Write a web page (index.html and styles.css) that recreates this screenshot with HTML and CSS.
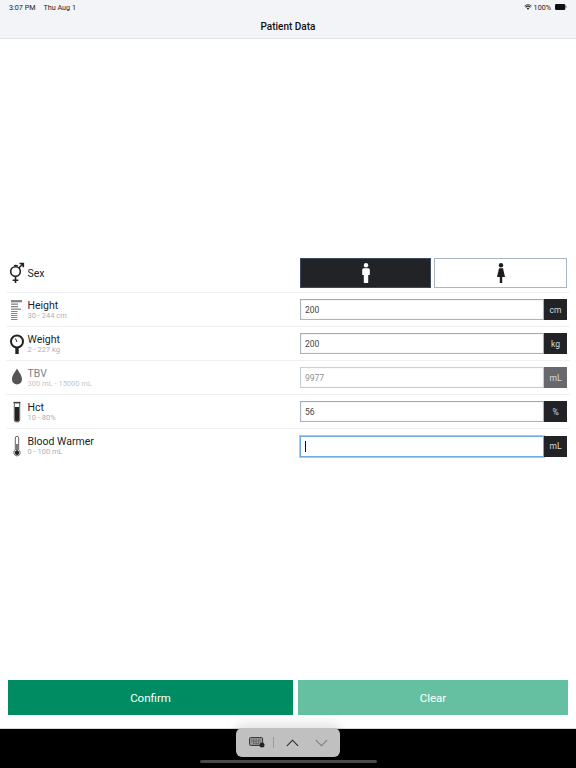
FILE: index.html
```html
<!DOCTYPE html>
<html lang="en">
<head>
<meta charset="utf-8">
<title>Patient Data</title>
<link rel="stylesheet" href="styles.css">
</head>
<body>
<div class="app">
  <header class="top">
    <div class="status">
      <div class="status-left"><span>3:07 PM</span><span>Thu Aug 1</span></div>
      <div class="status-right">
        <svg class="wifi" viewBox="0 0 10 8"><path d="M5 7.8 3.3 5.9a2.4 2.4 0 0 1 3.4 0zM2.3 4.9l-1-1a5.3 5.3 0 0 1 7.400 0l-1 1a3.900 3.900 0 0 0-5.400 0zM.6 3.200 0 2.500a7.200 7.200 0 0 1 10 0l-.6.7a6.300 6.300 0 0 0-8.800 0z"/></svg>
        <span>100%</span>
        <svg class="battery" viewBox="0 0 14 7"><rect x="0" y="0" width="12" height="7" rx="1.500"/><rect x="12.500" y="2" width="1" height="3" rx=".5" opacity=".5"/></svg>
      </div>
    </div>
    <h1 class="title">Patient Data</h1>
  </header>

  <main class="main">
    <div class="form">
      <div class="row row-sex">
        <div class="label">
          <svg class="icon" viewBox="0 0 18 22"><g fill="none" stroke="#222" stroke-width="1.600"><circle cx="7.500" cy="9.500" r="4.800"/><path d="M7.500 14.300v6.700M4.700 18.300h5.600M10.800 6 14.800 2M11.500 1.500H15.300V5.300"/></g><path d="M6 3.500a5.500 5.500 0 0 1 4 .5" fill="none" stroke="#222" stroke-width="1.200"/></svg>
          <div class="name">Sex</div>
        </div>
        <div class="control sex">
          <button class="sex-btn sex-on" type="button">
            <svg class="person" viewBox="0 0 8 20"><circle cx="4" cy="2.300" r="2.200"/><path d="M1.700 5.300h4.600q1.500 0 1.500 1.500v5.200H6.200V20H1.800v-8H.2V6.800q0-1.500 1.500-1.500z"/></svg>
          </button>
          <button class="sex-btn" type="button">
            <svg class="person dark" viewBox="0 0 8 20"><circle cx="4" cy="2.300" r="2.200"/><path d="M2 5.300h4L8 14H5.200v6H2.800v-6H0z"/></svg>
          </button>
        </div>
      </div>

      <div class="row">
        <div class="label">
          <svg class="icon" viewBox="0 0 18 22"><g fill="#888"><rect x="3" y="1" width="11" height="2.400"/><rect x="3" y="4.500" width="7" height="1.300"/><rect x="3" y="7" width="7" height="1.300"/><rect x="3" y="9.500" width="10" height="1.300"/><rect x="3" y="12" width="6.500" height="1"/><rect x="3" y="14" width="6.500" height="1"/><rect x="3" y="16" width="6.500" height="1"/><rect x="3" y="18" width="6.500" height="1"/><rect x="3" y="20" width="6.500" height="1"/></g></svg>
          <div class="name">Height<small>30 - 244 cm</small></div>
        </div>
        <div class="control"><div class="field">200</div><div class="unit">cm</div></div>
      </div>

      <div class="row">
        <div class="label">
          <svg class="icon" viewBox="0 0 18 22"><circle cx="9" cy="8.500" r="6" fill="none" stroke="#222" stroke-width="2"/><path d="M7.300 14h3.400v7H7.300z" fill="#222"/><path d="M7.500 5.500 9 9" stroke="#222" stroke-width="1"/></svg>
          <div class="name">Weight<small>2 - 227 kg</small></div>
        </div>
        <div class="control"><div class="field">200</div><div class="unit">kg</div></div>
      </div>

      <div class="row row-off">
        <div class="label">
          <svg class="icon" viewBox="0 0 18 22"><path d="M9 1.500c2 4 5 6.500 5 11a5 5 0 0 1-10 0c0-4.500 3-7 5-11z" fill="#555"/></svg>
          <div class="name">TBV<small>300 mL - 15000 mL</small></div>
        </div>
        <div class="control"><div class="field field-off">9977</div><div class="unit unit-off">mL</div></div>
      </div>

      <div class="row">
        <div class="label">
          <svg class="icon" viewBox="0 0 18 22"><path d="M5.500 1.500h7" stroke="#333" stroke-width="1.300"/><path d="M6.300 2h5.400v17q0 2-2.700 2t-2.700-2z" fill="#fff" stroke="#555" stroke-width="1"/><path d="M7 6h4v13q0 1.300-2 1.300T7 19z" fill="#222"/></svg>
          <div class="name">Hct<small>10 - 80%</small></div>
        </div>
        <div class="control"><div class="field">56</div><div class="unit">%</div></div>
      </div>

      <div class="row row-last">
        <div class="label">
          <svg class="icon" viewBox="0 0 18 22"><path d="M7.300 15V3a1.700 1.700 0 0 1 3.400 0v12a3.200 3.200 0 1 1-3.400 0z" fill="#fff" stroke="#555" stroke-width=".9"/><path d="M8.400 9h1.200v7H8.400z" fill="#222"/><circle cx="9" cy="17.700" r="2.200" fill="#222"/></svg>
          <div class="name">Blood Warmer<small>0 - 100 mL</small></div>
        </div>
        <div class="control"><div class="field field-focus"><span class="caret"></span></div><div class="unit">mL</div></div>
      </div>
    </div>

    <div class="actions">
      <button class="action confirm" type="button">Confirm</button>
      <button class="action clear" type="button">Clear</button>
    </div>
  </main>

  <footer class="keyboard">
    <div class="assist">
      <svg class="kb" viewBox="0 0 16 11"><rect x=".6" y=".6" width="13" height="7.800" rx="1" fill="#999" stroke="#333" stroke-width="1"/><path d="M2.500 3h9M2.500 4.800h9M4 6.600h6" stroke="#333" stroke-width=".8" stroke-dasharray="1 .6"/><circle cx="13" cy="8" r="2.500" fill="#222"/></svg>
      <span class="sep"></span>
      <svg class="chev" viewBox="0 0 14 8"><path d="M1 7l6-6 6 6" fill="none" stroke="#222" stroke-width="1.100"/></svg>
      <svg class="chev" viewBox="0 0 14 8"><path d="M1 1l6 6 6-6" fill="none" stroke="#777" stroke-width="1.100"/></svg>
    </div>
    <div class="home"></div>
  </footer>
</div>
</body>
</html>
```
FILE: styles.css
```css
* { box-sizing: border-box; }
html, body { margin: 0; padding: 0; }
body {
  width: 576px;
  height: 768px;
  overflow: hidden;
  background: #fff;
  color: #212529;
  font-family: Roboto, "Liberation Sans", sans-serif;
}
.app { height: 768px; display: flex; flex-direction: column; }

.top {
  height: 39px;
  flex: none;
  background: #f3f4f8;
  border-bottom: 1px solid #e3e4e8;
}
.status {
  height: 13px;
  padding: 1px 8px 0 9px;
  display: flex;
  justify-content: space-between;
  align-items: center;
  font-size: 7.200px;
  color: #222;
}
.status-left { display: flex; gap: 8px; }
.status-right { display: flex; align-items: center; gap: 2px; }
.wifi { width: 8px; height: 6px; fill: #222; }
.battery { width: 14px; height: 6px; fill: #111; margin-left: 1px; }
.title {
  margin: 0;
  padding-top: 2px;
  text-align: center;
  font-size: 10px;
  line-height: 24px;
  font-weight: 500;
  color: #111;
}

.main {
  flex: 1;
  display: flex;
  flex-direction: column;
  justify-content: space-between;
  padding: 215px 0 13px;
  position: relative;
}
.form { padding: 0 9px 0 6px; }
.row {
  height: 34px;
  display: flex;
  align-items: center;
  justify-content: space-between;
  border-bottom: 1px solid #eff0f2;
  margin-right: -3px;
  padding-right: 3px;
}
.row-sex { height: 39px; }
.row-last { border-bottom: 0; }
.label { display: flex; align-items: center; }
.icon { width: 18px; height: 22px; margin: 0 2px 0 1.500px; flex: none; }
.name { padding-top: 1px; font-size: 10.500px; line-height: 10px; color: #212529; }
.name small {
  display: block;
  font-size: 7.500px;
  line-height: 9px;
  color: #aab0bb;
}
.row-off .name { color: #7d8186; }
.row-off .name small { color: #c2c6cc; }

.control { width: 267px; height: 21px; display: flex; }
.field {
  flex: 1;
  display: flex;
  align-items: center;
  padding: 0 4px;
  font-size: 8.500px;
  color: #444;
  background: #fff;
  border: 1px solid #a9b5c6;
  border-top-color: #9aa8ba;
  box-shadow: inset 0 0 1px #a9b5c6;
}
.field-off { color: #8b8f94; border-color: #c7cdd7; box-shadow: inset 0 0 1px #c7cdd7; }
.field-focus {
  border-color: #6fa9e6;
  box-shadow: 0 0 0 1px #a6caf0;
}
.caret { width: 1px; height: 11px; background: #111; }
.unit {
  width: 23px;
  background: #212327;
  color: #d8d9da;
  font-size: 8.500px;
  display: flex;
  align-items: center;
  justify-content: center;
}
.unit-off { background: #67696d; }

.sex { height: 30px; gap: 3px; }
.sex-btn {
  flex: none;
  width: 133px;
  padding: 0;
  background: #fff;
  border: 1px solid #a9b5c6;
  display: flex;
  align-items: center;
  justify-content: center;
}
.sex-on { width: 131px; background: #212327; border-color: #3d4a5c; }
.person { width: 8px; height: 20px; fill: #fff; }
.person.dark { fill: #1c1c1e; }

.actions { display: flex; gap: 5px; padding: 0 8px; }
.action {
  height: 35px;
  border: 0;
  color: #fff;
  font: 400 11.500px Roboto, "Liberation Sans", sans-serif;
  padding: 0;
}
.confirm { width: 285px; background: #008c62; }
.clear { width: 270px; background: #65c0a2; }

.keyboard {
  height: 40px;
  flex: none;
  background: #000;
  border-top: 1px solid #d8d8d8;
  position: relative;
}
.assist {
  position: absolute;
  left: 236px;
  top: -1px;
  width: 104px;
  height: 29px;
  background: #c0c0c0;
  border-radius: 6px;
  box-shadow: 0 -4px 12px rgba(0, 0, 0, .12);
  display: flex;
  align-items: center;
  padding-left: 13px;
}
.kb { width: 16px; height: 11px; }
.sep { width: 1px; height: 11px; background: #9a9a9a; margin: 0 12px 0 8px; }
.chev { width: 13px; height: 8px; }
.chev + .chev { margin-left: 16px; }
.home {
  position: absolute;
  left: 200px;
  top: 31px;
  width: 177px;
  height: 3px;
  border-radius: 2px;
  background: #4a4a4a;
}
```
